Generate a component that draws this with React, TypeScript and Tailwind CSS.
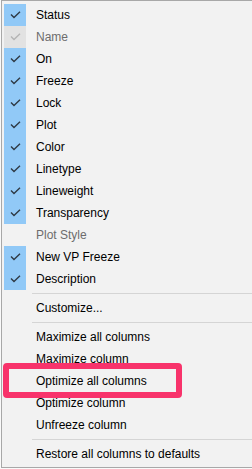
import React from 'react';

type Item = { label: string; checked?: boolean; disabled?: boolean };

const columns: Item[] = [
  { label: 'Status', checked: true },
  { label: 'Name', checked: true, disabled: true },
  { label: 'On', checked: true },
  { label: 'Freeze', checked: true },
  { label: 'Lock', checked: true },
  { label: 'Plot', checked: true },
  { label: 'Color', checked: true },
  { label: 'Linetype', checked: true },
  { label: 'Lineweight', checked: true },
  { label: 'Transparency', checked: true },
  { label: 'Plot Style', disabled: true },
  { label: 'New VP Freeze', checked: true },
  { label: 'Description', checked: true },
];

const actions = [
  'Maximize all columns',
  'Maximize column',
  'Optimize all columns',
  'Optimize column',
  'Unfreeze column',
];

function Check({ disabled }: { disabled?: boolean }) {
  return (
    <svg width="11" height="8" viewBox="0 0 11 8" fill="none">
      <path
        d="M1 3.5 L4 6.5 L10 0.8"
        stroke={disabled ? '#b4b4b4' : '#2f3a45'}
        strokeWidth={1.4}
      />
    </svg>
  );
}

function Row({ item }: { item: Item }) {
  const cell = item.checked
    ? item.disabled
      ? 'bg-[#e2e2e2]'
      : 'bg-[#91c9f7]'
    : '';
  return (
    <div className="flex h-[22px] items-center">
      <div className={`flex h-full w-[22px] items-center justify-center ${cell}`}>
        {item.checked && <Check disabled={item.disabled} />}
      </div>
      <span className={`ml-[10px] ${item.disabled ? 'text-[#6d6d6d]' : 'text-black'}`}>
        {item.label}
      </span>
    </div>
  );
}

function Plain({ label }: { label: string }) {
  return (
    <div className="flex h-[22px] items-center pl-[32px] text-black">{label}</div>
  );
}

function Separator() {
  return (
    <div className="flex h-[7px] items-center pl-[28px]">
      <div className="h-px w-full bg-[#d5d5d5]" />
    </div>
  );
}

export default function App() {
  return (
    <div
      className="relative h-[469px] w-[252px] overflow-hidden bg-[#fafafa] pl-px text-[12px]"
      style={{ fontFamily: '"Liberation Sans", Arial, sans-serif' }}
    >
      <div className="h-[468px] border-l border-t border-b border-[#a8a8a8] bg-[#f2f2f2] pl-[2px] pt-[3px]">
        {columns.map((c) => (
          <Row key={c.label} item={c} />
        ))}
        <Separator />
        <Plain label="Customize..." />
        <Separator />
        {actions.map((a) => (
          <Plain key={a} label={a} />
        ))}
        <Separator />
        <Plain label="Restore all columns to defaults" />
      </div>

      {/* annotation box */}
      <div className="absolute left-[3px] top-[363px] h-[35px] w-[179px] rounded-[4px] border-[6px] border-[#f8336b]" />
    </div>
  );
}
